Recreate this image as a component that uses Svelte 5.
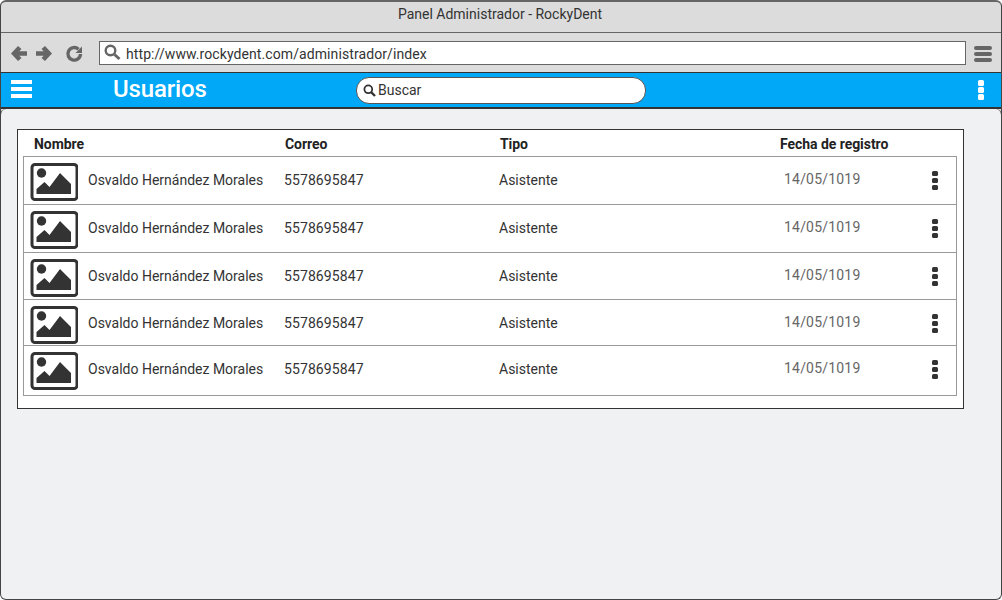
<script>
  const rows = [48, 48, 47, 46, 49];
</script>

<div class="window">
  <div class="title">Panel Administrador - RockyDent</div>
  <div class="toolbar">
    <svg class="nav" width="76" height="20" viewBox="0 0 76 20" fill="#666">
      <path d="M3 10.500 10 3 13.500 6 11.300 8.300H19V12.700H11.300L13.500 15 10 18Z" />
      <path d="M44 10.500 37 3 33.500 6 35.700 8.300H28V12.700H35.700L33.500 15 37 18Z" />
      <path d="M72.500 11a6.300 6.300 0 1 1-2-4.800" fill="none" stroke="#666" stroke-width="3.400" />
      <path d="M74 3.500V10H67.500Z" />
    </svg>
    <div class="url">
      <svg width="17" height="17" viewBox="0 0 17 17" fill="none" stroke="#666">
        <circle cx="6.500" cy="6.500" r="4.800" stroke-width="2.400" />
        <path d="M10.500 10.500 15.500 15" stroke-width="3" />
      </svg>
      <span>http://www.rockydent.com/administrador/index</span>
    </div>
    <div class="burger"><i></i><i></i><i></i></div>
  </div>
  <div class="appbar">
    <div class="menu"><i></i><i></i><i></i></div>
    <h1>Usuarios</h1>
    <div class="search">
      <svg width="13" height="13" viewBox="0 0 13 13" fill="none" stroke="#333">
        <circle cx="5.300" cy="5.300" r="3.900" stroke-width="1.800" />
        <path d="M8 8 12 12" stroke-width="2.400" />
      </svg>
      <span>Buscar</span>
    </div>
    <div class="more"><i></i><i></i><i></i></div>
  </div>
  <main>
    <section class="panel">
      <div class="head">
        <b class="c1">Nombre</b><b class="c2">Correo</b><b class="c3">Tipo</b><b class="c4">Fecha de registro</b>
      </div>
      <div class="list">
        {#each rows as h}
          <div class="row" style="height:{h}px">
            <svg class="pic" width="48" height="38" viewBox="0 0 48 38">
              <rect x="2" y="1.500" width="45" height="35" rx="3" fill="#fff" stroke="#333" stroke-width="3" />
              <circle cx="11.500" cy="10" r="4.700" fill="#333" />
              <path d="M6.500 31V26L14.500 19 19.500 24 30 10 41 21V31Z" fill="#333" />
            </svg>
            <span class="name">Osvaldo Hernández Morales</span>
            <span class="mail">5578695847</span>
            <span class="type">Asistente</span>
            <span class="date">14/05/1019</span>
            <div class="dots"><i></i><i></i><i></i></div>
          </div>
        {/each}
      </div>
    </section>
  </main>
</div>

<style>
  :global(body) {
    margin: 0;
    background: #fff;
  }
  .window {
    box-sizing: border-box;
    width: 1002px;
    height: 600px;
    display: flex;
    flex-direction: column;
    overflow: hidden;
    border: 1px solid #444;
    border-top: 2px solid #666;
    border-radius: 6px;
    background: #dcdcdc;
    font-family: Roboto, sans-serif;
    color: #333;
  }
  .title {
    height: 30px;
    border-bottom: 1px solid #666;
    padding-right: 2px;
    text-align: center;
    font-size: 14px;
    line-height: 24px;
  }
  .toolbar {
    height: 39px;
    display: flex;
    align-items: center;
    padding-left: 7px;
    padding-right: 9px;
    box-sizing: border-box;
  }
  .nav {
    flex: none;
    margin-right: 15px;
  }
  .url {
    flex: 1;
    box-sizing: border-box;
    height: 24px;
    display: flex;
    align-items: center;
    gap: 5px;
    padding-left: 4px;
    margin-top: 1px;
    background: #fff;
    border: 1px solid #666;
    font-size: 14px;
    letter-spacing: 0.09px;
  }
  .url span {
    margin-top: 1px;
  }
  .url svg {
    margin-top: -2px;
  }
  .burger {
    display: flex;
    flex-direction: column;
    gap: 2px;
    margin-left: 8px;
    margin-top: 2px;
  }
  .burger i {
    width: 18px;
    height: 4px;
    border-radius: 2px;
    background: #666;
  }
  .appbar {
    box-sizing: border-box;
    height: 37px;
    flex: none;
    margin: 0 -1px;
    display: flex;
    align-items: center;
    background: #00a8f7;
    border-top: 1px solid #333;
    border-bottom: 2px solid #333;
  }
  .menu {
    display: flex;
    flex-direction: column;
    gap: 3px;
    margin-left: 11px;
    margin-top: -2px;
  }
  .menu i {
    display: block;
    width: 21px;
    height: 4px;
    background: #fff;
  }
  h1 {
    margin: -2px 0 0 81px;
    width: 243px;
    font-size: 24px;
    font-weight: 500;
    letter-spacing: -0.15px;
    line-height: 30px;
    color: #fff;
  }
  .search {
    box-sizing: border-box;
    width: 290px;
    height: 27px;
    display: flex;
    align-items: center;
    gap: 2px;
    padding-left: 6px;
    background: #fff;
    border: 1px solid #555;
    border-radius: 13px;
    font-size: 14px;
  }
  .more {
    display: flex;
    flex-direction: column;
    gap: 1px;
    margin-left: auto;
    margin-right: 18px;
    margin-top: -1px;
  }
  .more i {
    display: block;
    width: 6px;
    height: 6px;
    border-radius: 1.500px;
    background: #fff;
  }
  main {
    flex: 1;
    background: #f0f1f3;
    margin: 0 -1px -1px;
    border: 1px solid #444;
    border-top: none;
    border-radius: 6px;
    padding: 20px 0 0 16px;
  }
  .panel {
    box-sizing: border-box;
    width: 947px;
    height: 280px;
    background: #fff;
    border: 1px solid #333;
    padding: 0 6px 0 5px;
  }
  .head {
    box-sizing: border-box;
    height: 26px;
    padding-top: 2px;
    display: flex;
    align-items: center;
    font-size: 14px;
    letter-spacing: -0.05px;
  }
  .head b {
    font-weight: 700;
    color: #222;
  }
  .c1 { width: 251px; margin-left: 11px; }
  .c2 { width: 215px; }
  .c3 { width: 280px; }
  .list {
    box-sizing: border-box;
    height: 240px;
    border: 1px solid #999;
  }
  .row {
    box-sizing: border-box;
    display: flex;
    align-items: flex-start;
    padding: 6px 0 0 6px;
    border-bottom: 1px solid #999;
    font-size: 14px;
    line-height: 34px;
  }
  .row:last-child {
    border-bottom: none;
  }
  .pic { flex: none; margin-right: 10px; }
  .name { width: 196px; }
  .mail { width: 215px; letter-spacing: 0.1px; }
  .type { width: 285px; }
  .date { width: 148px; color: #666; line-height: 33px; letter-spacing: 0.2px; }
  .dots {
    display: flex;
    flex-direction: column;
    gap: 2px;
    margin-top: 8px;
  }
  .dots i {
    display: block;
    width: 6px;
    height: 5px;
    border-radius: 1.500px;
    background: #333;
  }
</style>
